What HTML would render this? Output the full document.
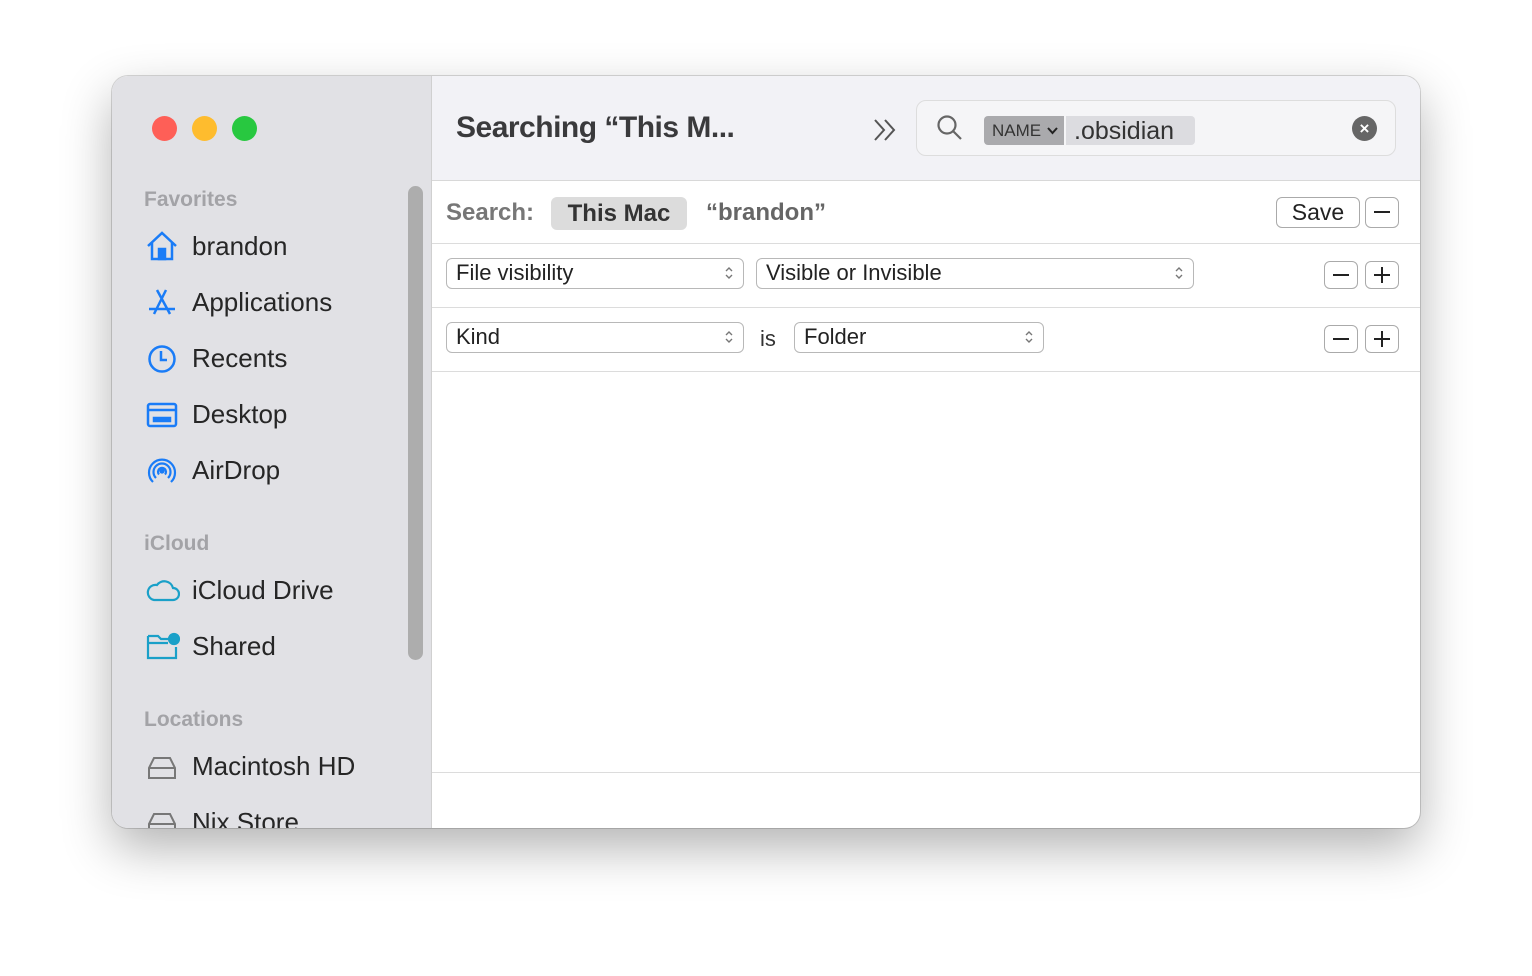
<!DOCTYPE html><html><head><style>
body{margin:0;width:1532px;height:976px;background:#fff;font-family:"Liberation Sans",sans-serif;position:relative;overflow:hidden}
.win{position:absolute;left:112px;top:76px;width:1308px;height:752px;border-radius:16px;overflow:hidden;background:#fff;box-shadow:0 20px 50px rgba(0,0,0,.3),0 0 0 1px rgba(0,0,0,.15)}
.side{position:absolute;left:0;top:0;width:319px;height:752px;background:#e1e1e5;border-right:1px solid #d0d0d0}
.dot{position:absolute;top:40px;width:25px;height:25px;border-radius:50%}
.hdr{position:absolute;left:32px;font-size:21px;font-weight:bold;color:#a3a3a7}
.it{position:absolute;left:80px;font-size:26px;color:#262626}
.ic{position:absolute;left:34px}
.scroll{position:absolute;left:296px;top:110px;width:15px;height:474px;border-radius:8px;background:#adadad}
.tb{position:absolute;left:320px;top:0;right:0;height:104px;background:#f2f2f6;border-bottom:1px solid #d8d8d8}
.t{position:absolute;font-size:30px;font-weight:bold;color:#3a3a3c;letter-spacing:-0.5px}
.sel{position:absolute;height:31px;border:1.5px solid #b8b8b8;border-radius:6px;box-sizing:border-box;font-size:22px;color:#222;padding-left:9px;line-height:27px;background:#fff}
.arr{position:absolute;right:9px;top:6px}
.btn{position:absolute;width:34px;height:28px;border:1.5px solid #aaa;border-radius:6px;box-sizing:border-box;background:#fff}
.btn svg{position:absolute;left:7px;top:4px}
.line{position:absolute;left:320px;right:0;height:1px;background:#dcdcdc}
</style></head><body>
<svg width="0" height="0" style="position:absolute"><defs>
<symbol id="ud" viewBox="0 0 10 16"><path d="M2 6 L5 3 L8 6 M2 10 L5 13 L8 10" fill="none" stroke="#777" stroke-width="1.4"/></symbol>
<symbol id="mi" viewBox="0 0 18 18"><path d="M1 9 H17" stroke="#222" stroke-width="2"/></symbol>
<symbol id="pl" viewBox="0 0 18 18"><path d="M1 9 H17 M9 1 V17" stroke="#222" stroke-width="2"/></symbol>
</defs></svg>
<div class="win">
<div class="side">
<div class="dot" style="left:40px;background:#fe5f57"></div>
<div class="dot" style="left:80px;background:#febc2e"></div>
<div class="dot" style="left:120px;background:#28c840"></div>
<div class="scroll"></div>
<div class="hdr" style="top:112px">Favorites</div>
<svg class="ic" style="top:155px" width="32" height="30" viewBox="0 0 32 30" fill="none" stroke="#1a7cf7" stroke-width="2.5"><path d="M2 15 L16 2 L30 15 M6 12 V28 H26 V12"/><rect x="13" y="18" width="6" height="10" fill="#1a7cf7"/></svg>
<div class="it" style="top:155px">brandon</div>
<svg class="ic" style="top:212px" width="32" height="30" viewBox="0 0 32 30" fill="none" stroke="#1a7cf7" stroke-width="2.5"><path d="M11 2 L24 26 M20 2 L8 26 M3 21 H29"/></svg>
<div class="it" style="top:211px">Applications</div>
<svg class="ic" style="top:268px" width="32" height="30" viewBox="0 0 32 30" fill="none" stroke="#1a7cf7" stroke-width="2.5"><circle cx="16" cy="15" r="12.5"/><path d="M15 7 V16 H21"/></svg>
<div class="it" style="top:267px">Recents</div>
<svg class="ic" style="top:324px" width="32" height="30" viewBox="0 0 32 30" fill="none" stroke="#1a7cf7" stroke-width="2.5"><rect x="2" y="4" width="28" height="22" rx="2"/><path d="M2 10 H30"/><rect x="8" y="18" width="16" height="3" fill="#1a7cf7"/></svg>
<div class="it" style="top:323px">Desktop</div>
<svg class="ic" style="top:380px" width="32" height="32" viewBox="0 0 32 32" fill="none" stroke="#1a7cf7" stroke-width="2.2"><path d="M7 26 A13 13 0 1 1 25 26 M10 22 A8.5 8.5 0 1 1 22 22 M13 18.5 A4 4 0 1 1 19 18.5"/><circle cx="16" cy="15" r="1.5" fill="#1a7cf7"/></svg>
<div class="it" style="top:379px">AirDrop</div>
<div class="hdr" style="top:456px">iCloud</div>
<svg class="ic" style="top:500px" width="34" height="28" viewBox="0 0 34 28" fill="none" stroke="#1aa0c8" stroke-width="2.2"><path d="M8 24 H27 A6 6 0 0 0 27 12 A9 9 0 0 0 11 9 A7.5 7.5 0 0 0 8 24 Z"/></svg>
<div class="it" style="top:499px">iCloud Drive</div>
<svg class="ic" style="top:556px" width="34" height="28" viewBox="0 0 34 28" fill="none" stroke="#1aa0c8" stroke-width="2.2"><path d="M2 4 H12 L15 7 H24 M2 4 V26 H30 V15 M2 11 H22"/><circle cx="28" cy="7" r="5" fill="#1aa0c8"/></svg>
<div class="it" style="top:555px">Shared</div>
<div class="hdr" style="top:632px">Locations</div>
<svg class="ic" style="top:678px" width="32" height="28" viewBox="0 0 32 28" fill="none" stroke="#777" stroke-width="2"><path d="M3 14 L8 4 H24 L29 14 V24 H3 Z M3 14 H29"/></svg>
<div class="it" style="top:675px">Macintosh HD</div>
<svg class="ic" style="top:734px" width="32" height="28" viewBox="0 0 32 28" fill="none" stroke="#777" stroke-width="2"><path d="M3 14 L8 4 H24 L29 14 V24 H3 Z M3 14 H29"/></svg>
<div class="it" style="top:731px">Nix Store</div>
</div>
<div class="tb">
<div class="t" style="left:24px;top:35px">Searching “This M...</div>
<svg style="position:absolute;left:440px;top:42px" width="26" height="24" viewBox="0 0 26 24" fill="none" stroke="#555" stroke-width="2"><path d="M3 2 L12 12 L3 22 M13 2 L22 12 L13 22"/></svg>
<div style="position:absolute;left:484px;top:24px;width:478px;height:54px;border:1px solid #ddd;border-radius:10px;background:#f5f5f7"></div>
<svg style="position:absolute;left:504px;top:38px" width="28" height="28" viewBox="0 0 28 28" fill="none" stroke="#666" stroke-width="2.2"><circle cx="11" cy="11" r="8.5"/><path d="M17 17 L25 25"/></svg>
<div style="position:absolute;left:552px;top:40px;width:80px;height:29px;background:#aaaaad;border-radius:4px 0 0 4px;font-size:17px;line-height:29px;color:#333;padding-left:8px;box-sizing:border-box">NAME<svg style="position:absolute;left:63px;top:11px" width="11" height="8" viewBox="0 0 11 8"><path d="M1 1 L5.5 6 L10 1" fill="none" stroke="#222" stroke-width="2"/></svg></div>
<div style="position:absolute;left:634px;top:40px;width:129px;height:29px;background:#dcdce0;border-radius:0 4px 4px 0;font-size:25px;line-height:30px;color:#333;padding-left:8px;box-sizing:border-box">.obsidian</div>
<div style="position:absolute;left:920px;top:40px;width:25px;height:25px;border-radius:50%;background:#666;color:#fff;text-align:center;font-size:17px;line-height:25px;font-weight:bold">×</div>
</div>
<div style="position:absolute;left:334px;top:123px;font-size:24px;font-weight:bold;color:#777">Search:</div>
<div style="position:absolute;left:439px;top:121px;width:136px;height:33px;border-radius:6px;background:#dcdcdc;font-size:24px;font-weight:bold;color:#333;text-align:center;line-height:34px">This Mac</div>
<div style="position:absolute;left:594px;top:123px;font-size:24px;font-weight:bold;color:#666">“brandon”</div>
<div class="btn" style="left:1164px;top:121px;width:84px;height:31px;font-size:23px;line-height:28px;text-align:center;color:#222">Save</div>
<div class="btn" style="left:1253px;top:121px;height:31px"><svg style="left:7px;top:5px" width="18" height="18"><use href="#mi"/></svg></div>
<div class="line" style="top:167px"></div>
<div class="sel" style="left:334px;top:182px;width:298px">File visibility<svg class="arr" width="10" height="16"><use href="#ud"/></svg></div>
<div class="sel" style="left:644px;top:182px;width:438px">Visible or Invisible<svg class="arr" width="10" height="16"><use href="#ud"/></svg></div>
<div class="btn" style="left:1212px;top:185px"><svg width="18" height="18"><use href="#mi"/></svg></div><div class="btn" style="left:1253px;top:185px"><svg width="18" height="18"><use href="#pl"/></svg></div>
<div class="line" style="top:231px"></div>
<div class="sel" style="left:334px;top:246px;width:298px">Kind<svg class="arr" width="10" height="16"><use href="#ud"/></svg></div>
<div style="position:absolute;left:648px;top:250px;font-size:22px;color:#333">is</div>
<div class="sel" style="left:682px;top:246px;width:250px">Folder<svg class="arr" width="10" height="16"><use href="#ud"/></svg></div>
<div class="btn" style="left:1212px;top:249px"><svg width="18" height="18"><use href="#mi"/></svg></div><div class="btn" style="left:1253px;top:249px"><svg width="18" height="18"><use href="#pl"/></svg></div>
<div class="line" style="top:295px"></div>
<div class="line" style="top:696px"></div>
</div>
</body></html>
